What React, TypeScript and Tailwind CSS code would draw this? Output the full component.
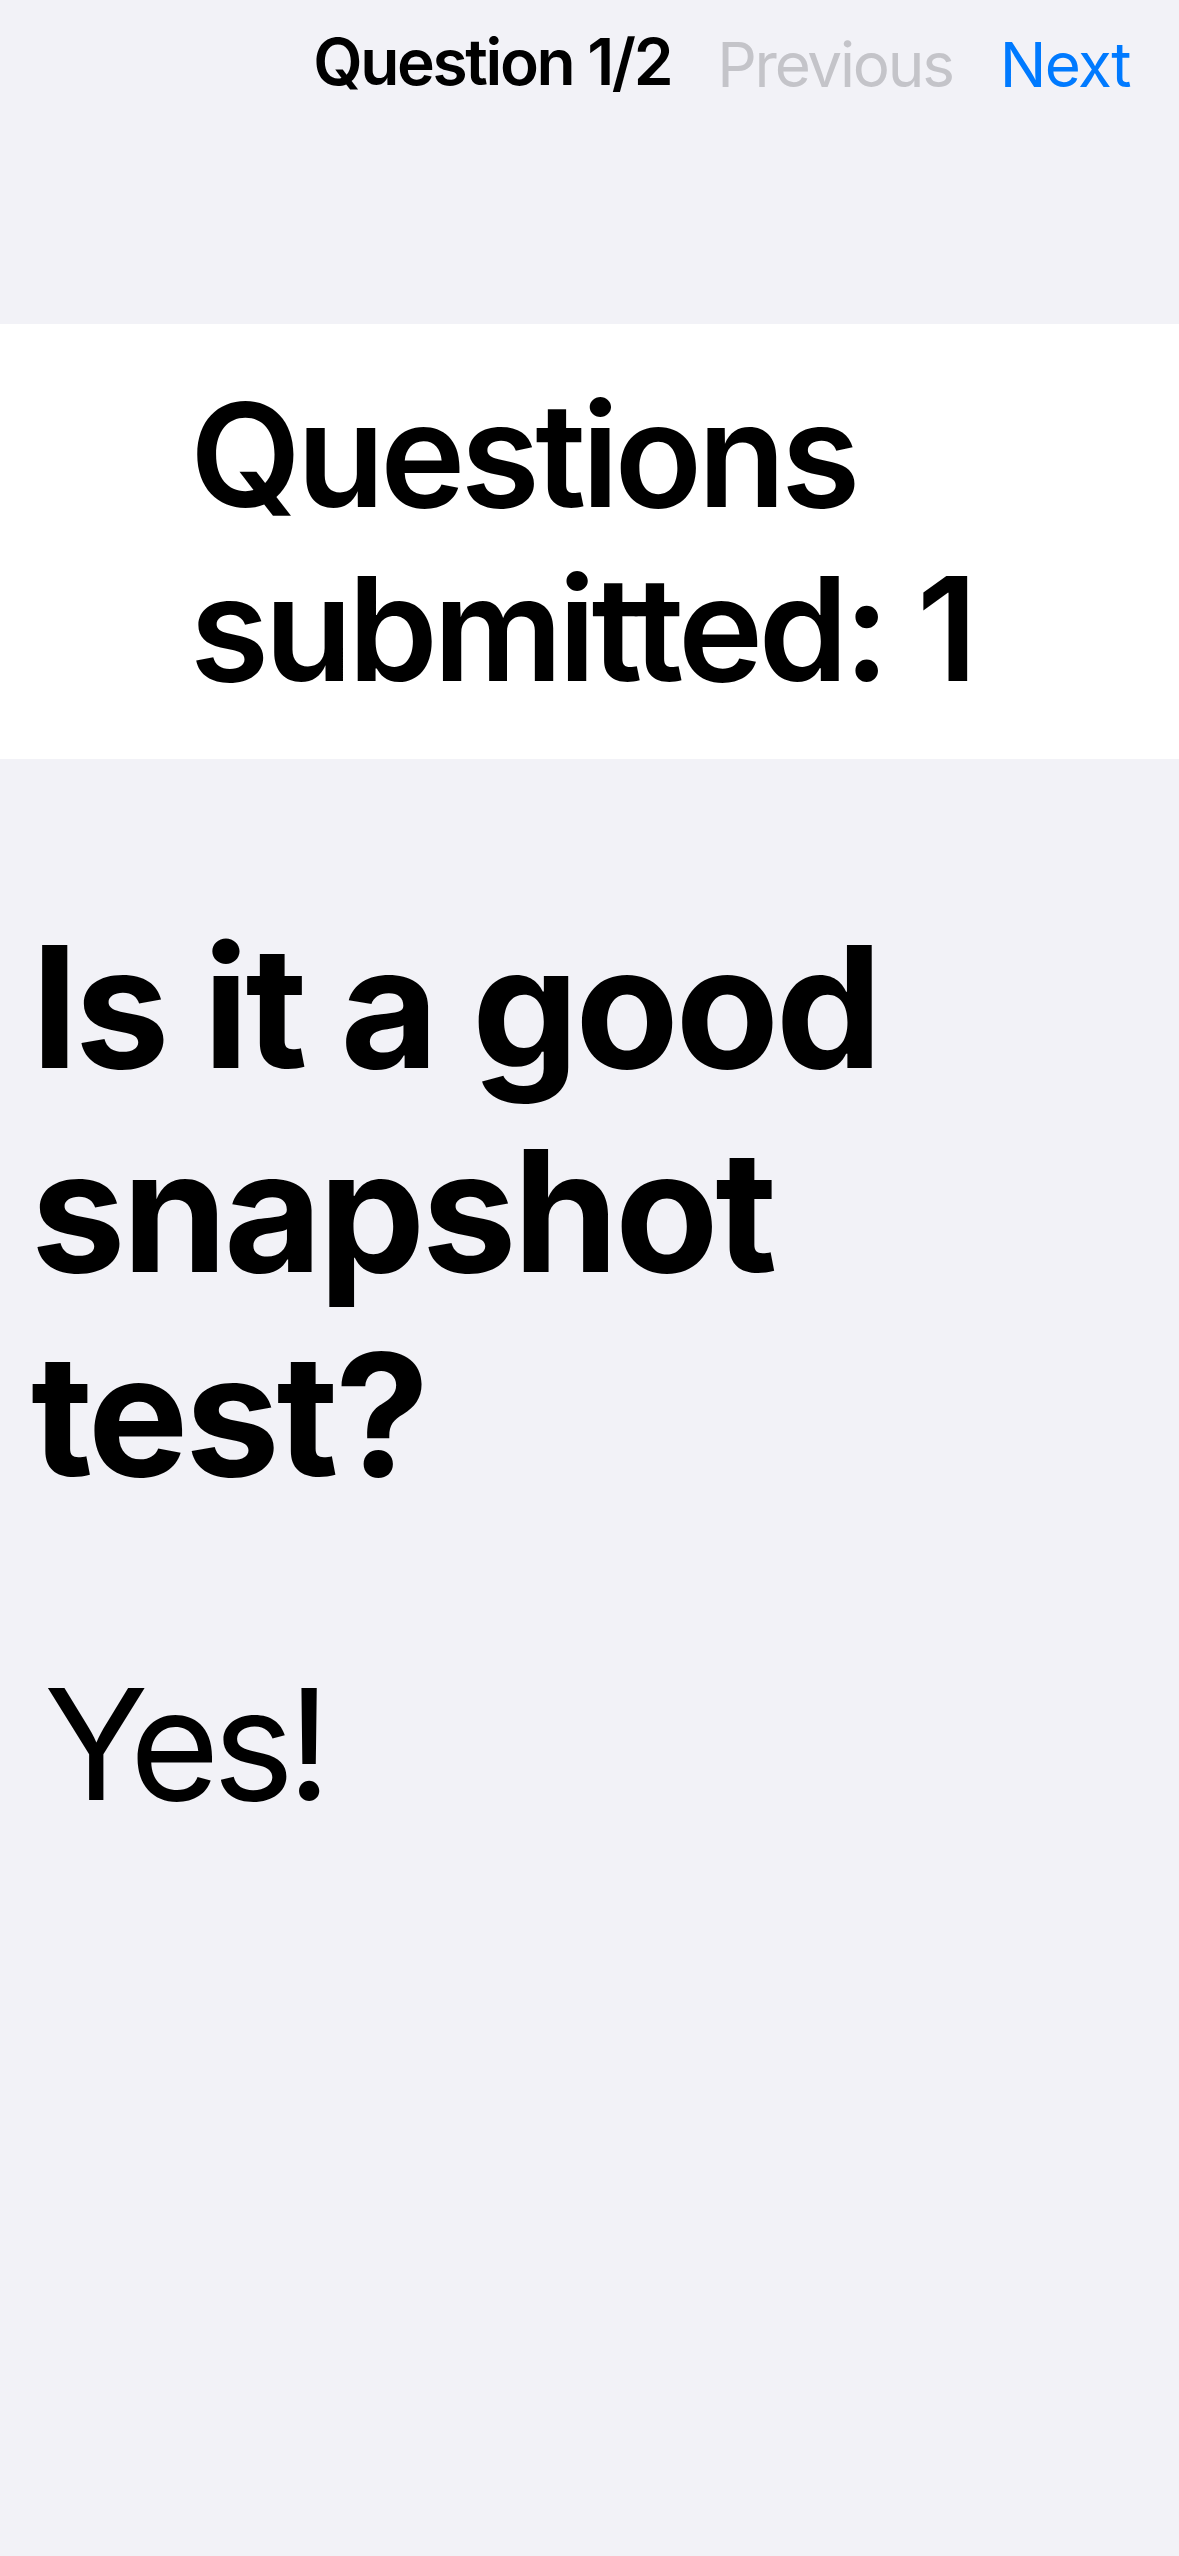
export default function App() {
  return (
    <div
      className="min-h-[2556px] w-[1179px] bg-[#f2f2f7] text-black"
      style={{ fontFamily: "Inter, 'Noto Sans', sans-serif" }}
    >
      {/* Nav bar */}
      <div className="flex h-[324px] items-start justify-end pr-[49px] pt-[23px]">
        <span className="text-[64px] font-semibold leading-[77px] tracking-[-0.037em]">
          Question 1/2
        </span>
        <span className="ml-[46px] mt-[3px] text-[62px] leading-[77px] tracking-[-0.036em] text-[#c4c4c9]">
          Previous
        </span>
        <span className="ml-[47px] mt-[3px] text-[62px] leading-[77px] tracking-[-0.026em] text-[#007aff]">
          Next
        </span>
      </div>

      {/* Submitted count */}
      <div className="bg-white pl-[190px] pt-[44px] pb-[43px]">
        <p className="text-[144px] font-semibold leading-[174px] tracking-[-0.032em]">
          Questions
          <br />
          submitted: 1
        </p>
      </div>

      {/* Question */}
      <h1 className="mt-[146px] pl-[31px] text-[169px] font-bold leading-[204px] tracking-[-0.02em]">
        Is it a good
        <br />
        snapshot
        <br />
        test?
      </h1>

      <p className="mt-[135px] pl-[44px] text-[154px] leading-[185px] tracking-[-0.045em]">
        Yes!
      </p>
    </div>
  );
}
